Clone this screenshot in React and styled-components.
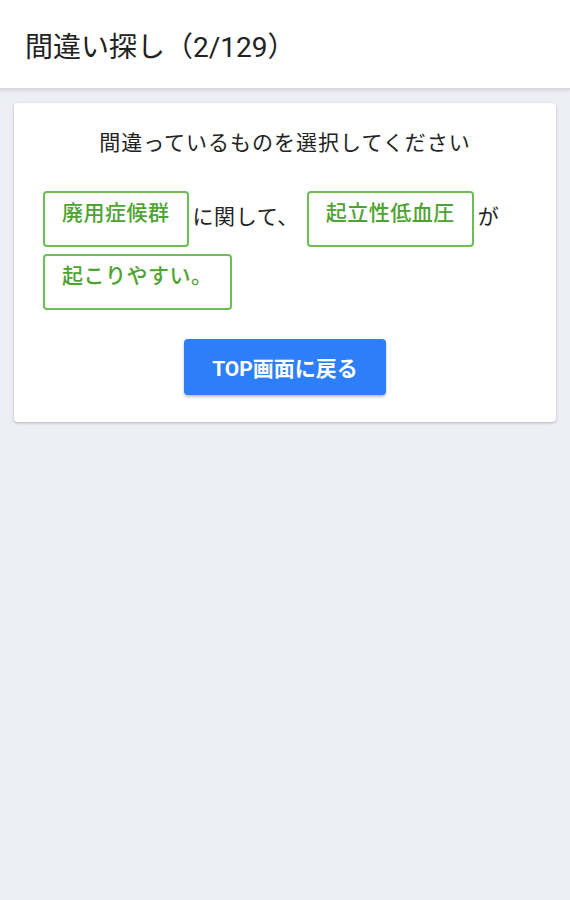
import React from 'react';
import styled, { createGlobalStyle } from 'styled-components';

const GlobalStyle = createGlobalStyle`
  html, body {
    margin: 0;
    padding: 0;
    background: #eeeff6;
    font-family: Roboto, "Noto Sans CJK JP", sans-serif;
    color: #222;
  }
`;

const Page = styled.div`
  min-height: 900px;
  background: #eeeff6;
`;

const Header = styled.header`
  height: 90px;
  background: #fff;
  display: flex;
  align-items: center;
  padding: 0 25px;
  box-sizing: border-box;
  border-bottom: 2px solid #d9d9de;
  box-shadow: 0 2px 3px rgba(0, 0, 0, 0.06);
`;

const Title = styled.h1`
  margin: 0;
  font-size: 28px;
  font-weight: 400;
  color: #222;
  padding-top: 2px;
`;

const Card = styled.section`
  margin: 13px 14px 0;
  background: #fff;
  border-radius: 4px;
  box-shadow: 0 1px 3px rgba(0, 0, 0, 0.25);
  padding: 24px 29px 27px;
  display: flex;
  flex-direction: column;
`;

const Instruction = styled.p`
  margin: 0;
  text-align: center;
  font-size: 21px;
  letter-spacing: 1px;
  line-height: 32px;
  color: #222;
`;

const Sentence = styled.div`
  margin-top: 32px;
  display: flex;
  flex-wrap: wrap;
  align-items: flex-start;
  column-gap: 4px;
  row-gap: 7px;
`;

const Chip = styled.button`
  height: 56px;
  min-width: ${(p) => p.$min || 0}px;
  box-sizing: border-box;
  background: #fff;
  border: 2px solid #6cbd52;
  border-radius: 4px;
  padding: 4px 17px 0;
  display: flex;
  align-items: flex-start;
  font-family: inherit;
  font-size: 21px;
  font-weight: 500;
  letter-spacing: 0.5px;
  line-height: 32px;
  color: #4ea332;
  cursor: pointer;
`;

const Plain = styled.span`
  font-size: 21px;
  letter-spacing: 0.6px;
  line-height: 32px;
  padding: 10px 4px 0 0;
  color: #222;
`;

const Actions = styled.div`
  margin-top: 29px;
  display: flex;
  justify-content: center;
`;

const TopButton = styled.button`
  width: 202px;
  height: 56px;
  border: none;
  border-radius: 4px;
  background: #2c7ff9;
  color: #fff;
  font-family: inherit;
  font-size: 21px;
  font-weight: 700;
  box-shadow: 0 2px 3px rgba(0, 0, 0, 0.25);
  cursor: pointer;
`;

const parts = [
  { type: 'chip', text: '廃用症候群', min: 145 },
  { type: 'text', text: 'に関して、' },
  { type: 'chip', text: '起立性低血圧', min: 167 },
  { type: 'text', text: 'が' },
  { type: 'chip', text: '起こりやすい。', min: 189 },
];

export default function App() {
  return (
    <>
      <GlobalStyle />
      <Page>
        <Header>
          <Title>間違い探し（2/129）</Title>
        </Header>
        <Card>
          <Instruction>間違っているものを選択してください</Instruction>
          <Sentence>
            {parts.map((p, i) =>
              p.type === 'chip' ? (
                <Chip key={i} $min={p.min}>{p.text}</Chip>
              ) : (
                <Plain key={i}>{p.text}</Plain>
              )
            )}
          </Sentence>
          <Actions>
            <TopButton>TOP画面に戻る</TopButton>
          </Actions>
        </Card>
      </Page>
    </>
  );
}
